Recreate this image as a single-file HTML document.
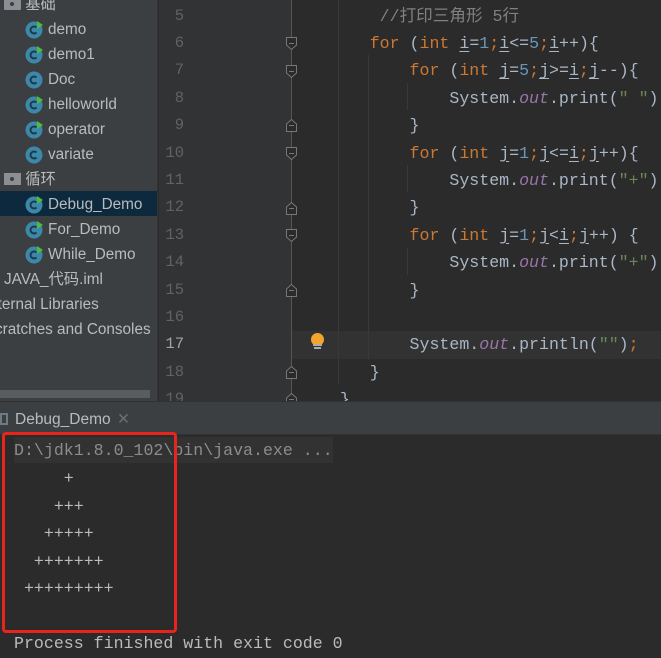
<!DOCTYPE html>
<html><head><meta charset="utf-8">
<style>
*{margin:0;padding:0;box-sizing:border-box}
body{width:661px;height:651px;overflow:hidden;background:#2b2b2b;position:relative;font-family:"Liberation Sans","Noto Sans CJK SC",sans-serif}
.abs{position:absolute}
#side{left:0;top:0;width:158px;height:401px;background:#3c3f41;border-right:1px solid #323232}
.it{position:absolute;height:25px;line-height:25px;font-size:15.3px;color:#bbbbbb;white-space:nowrap}
.ic{position:absolute;left:25px;top:4px;width:18px;height:18px}
#gut{left:159px;top:0;width:133px;height:401px;background:#313335}
.ln{position:absolute;left:159px;width:25px;text-align:right;font:15.5px "Liberation Mono",monospace;color:#606366;height:27.4px;line-height:27.4px}
.code{position:absolute;left:0;font:16.6px "Liberation Mono",monospace;color:#a9b7c6;white-space:pre;height:27.4px;line-height:27.4px}
.k{color:#cc7832}.n{color:#6897bb}.o{color:#9876aa;font-style:italic}.s{color:#6a8759}.c{color:#808080}
u{text-decoration:underline;text-underline-offset:3px}
.guide{position:absolute;width:1px;background:#393939}
#tab{left:0;top:401px;width:661px;height:34px;background:#3c3f41;border-top:1px solid #323232;border-bottom:1px solid #323232}
.con{position:absolute;font:16.6px "Liberation Mono",monospace;color:#bbbbbb;white-space:pre;line-height:27.6px}
</style></head><body>
<div id="side" class="abs">
 <div class="abs" style="left:0;top:191px;width:157px;height:25px;background:#0d293e"></div>
 <div class="abs" style="left:0;top:390px;width:150px;height:8px;background:#5a5d5f"></div>
 <div class="it" style="left:4px;top:-8px"><span style="display:inline-block;width:17px;height:12px;background:#8b8f93;border-radius:1px;vertical-align:-1px;position:relative"><span style="position:absolute;left:6px;top:4px;width:4px;height:4px;background:#3c3f41;border-radius:50%"></span></span> 基础</div>
</div>
<div id="gut" class="abs"></div>
<div class="abs" style="left:292px;top:331px;width:369px;height:28px;background:#323232"></div>
<div class="abs" style="left:291px;top:0;width:1px;height:401px;background:#555"></div>
<div id="tab" class="abs">
 <div class="abs" style="left:0;top:11px;width:8px;height:12px;border:2px solid #6e7b82"></div>
 <div class="abs" style="left:15px;top:1px;line-height:33px;font-size:15.5px;color:#bbbbbb">Debug_Demo <span style="color:#6c6f71;margin-left:2px">✕</span></div>
</div>
<div class="abs" style="left:14px;top:437px;width:319px;height:26px;background:#323232"></div>
<div class="con" style="left:14px;top:437px;color:#8c8c8c">D:\jdk1.8.0_102\bin\java.exe ...</div>
<div class="con" style="left:14px;top:465px">     +
    +++
   +++++
  +++++++
 +++++++++</div>
<div class="con" style="left:14px;top:630px">Process finished with exit code 0</div>
<div class="abs" style="left:2px;top:432px;width:175px;height:201px;border:3px solid #e8241c;border-radius:4px"></div>
<div class="abs" style="left:311px;top:333px;width:13px;height:13px;border-radius:50%;background:#f1a52c"></div>
<div class="abs" style="left:313px;top:344px;width:9px;height:2px;background:#aaa"></div>
<div class="abs" style="left:314px;top:347px;width:7px;height:2px;background:#aaa"></div>
<script>
var items=[["demo",1],["demo1",1],["Doc",0],["helloworld",1],["operator",1],["variate",0],null,["Debug_Demo",1],["For_Demo",1],["While_Demo",1]];
var s=document.getElementById('side'),h='';
items.forEach(function(it,i){var y=17+i*25;
 if(!it){h+='<div class="it" style="left:4px;top:'+(y)+'px"><span style="display:inline-block;width:17px;height:12px;background:#8b8f93;vertical-align:-1px;position:relative"><span style="position:absolute;left:6px;top:4px;width:4px;height:4px;background:#3c3f41;border-radius:50%"></span></span> 循环</div>';return;}
 h+='<div class="it" style="left:0;top:'+y+'px;width:157px"><svg class="ic" viewBox="0 0 18 18"><circle cx="9" cy="9" r="8.5" fill="#3b88ab"/><path d="M11.5 6.5A3.5 3.5 0 1 0 11.5 11.5" fill="none" stroke="#1f3a47" stroke-width="2"/>'+(it[1]?'<path d="M12 0L18 4L12 8Z" fill="#4ebb3c"/>':'')+'</svg><span style="position:absolute;left:48px">'+it[0]+'</span></div>';});
h+='<div class="it" style="left:4px;top:267px">JAVA_代码.iml</div><div class="it" style="left:-10px;top:292px">xternal Libraries</div><div class="it" style="left:-5px;top:317px">cratches and Consoles</div>';
s.innerHTML+=h;
var code=[
'        <span class="c">//打印三角形 5行</span>',
'       <span class="k">for</span> (<span class="k">int</span> <u>i</u>=<span class="n">1</span><span class="k">;</span><u>i</u>&lt;=<span class="n">5</span><span class="k">;</span><u>i</u>++){',
'           <span class="k">for</span> (<span class="k">int</span> <u>j</u>=<span class="n">5</span><span class="k">;</span><u>j</u>&gt;=<u>i</u><span class="k">;</span><u>j</u>--){',
'               System.<span class="o">out</span>.print(<span class="s">" "</span>)',
'           }',
'           <span class="k">for</span> (<span class="k">int</span> <u>j</u>=<span class="n">1</span><span class="k">;</span><u>j</u>&lt;=<u>i</u><span class="k">;</span><u>j</u>++){',
'               System.<span class="o">out</span>.print(<span class="s">"+"</span>)',
'           }',
'           <span class="k">for</span> (<span class="k">int</span> <u>j</u>=<span class="n">1</span><span class="k">;</span><u>j</u>&lt;<u>i</u><span class="k">;</span><u>j</u>++) {',
'               System.<span class="o">out</span>.print(<span class="s">"+"</span>)',
'           }',
'',
'           System.<span class="o">out</span>.println(<span class="s">""</span>)<span class="k">;</span>',
'       }',
'    }'];
var b=document.body,g='';
g+='<div class="guide" style="left:338px;top:0;height:385px"></div><div class="guide" style="left:368px;top:55px;height:305px"></div><div class="guide" style="left:407px;top:83px;height:27px"></div><div class="guide" style="left:407px;top:165px;height:27px"></div><div class="guide" style="left:407px;top:248px;height:27px"></div>';
for(var i=0;i<15;i++){var N=5+i,t=2.5+i*27.4;
 g+='<div class="ln" style="top:'+t+'px;'+(N==17?'color:#a4a3a3':'')+'">'+N+'</div>';
 g+='<div class="code" style="left:300px;top:'+t+'px">'+code[i]+'</div>';}
var folds={6:'d',7:'d',9:'u',10:'d',12:'u',13:'d',15:'u',18:'u',19:'u'};
for(var k in folds){var cy=2+(k-5)*27.4+13.7;
 g+='<svg class="abs" style="left:285px;top:'+(cy-7)+'px" width="13" height="15" viewBox="0 0 13 15">'+(folds[k]=='d'?'<path d="M1.5 1.5H11.5V9L6.5 13.5L1.5 9Z" fill="#2b2b2b" stroke="#777"/>':'<path d="M1.5 13.5H11.5V6L6.5 1.5L1.5 6Z" fill="#2b2b2b" stroke="#777"/>')+'<path d="M4 7.5H9" stroke="#777"/></svg>';}
var w=document.createElement('div');w.innerHTML=g;
b.insertBefore(w,document.getElementById('tab'));
</script>
</body></html>
